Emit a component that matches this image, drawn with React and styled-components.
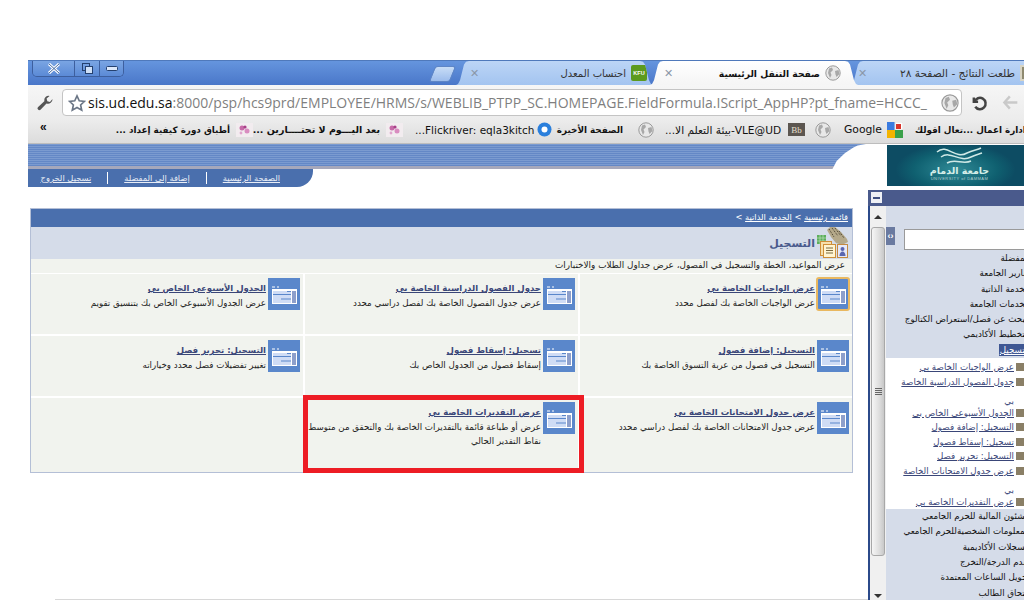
import React from "react";
import styled, { createGlobalStyle } from "styled-components";

const Global = createGlobalStyle`
  html, body { margin: 0; padding: 0; background: #fff; }
  body { width: 1024px; height: 600px; overflow: hidden; font-family: "DejaVu Sans", "Liberation Sans", sans-serif; }
  svg { flex: none; }
`;
const Page = styled.div`
  width: 1024px; height: 600px; overflow: hidden; padding-top: 60px; padding-left: 28px; box-sizing: border-box; position: relative;
`;
const Chrome = styled.div`width: 996px;`;
const TabStrip = styled.div`
  height: 25px; display: flex; align-items: flex-end; overflow: hidden;
  background: linear-gradient(#6595de, #4a77c9);
  border-top: 1px solid #4f79bb; box-sizing: border-box; position: relative; padding-left: 4px;
`;
const WinButtons = styled.div`
  display: flex; align-self: flex-start; width: 92px; height: 16px; box-sizing: border-box; flex: none;
  border: 1px solid #3d5f9e; border-top: 0; border-radius: 0 0 5px 5px; overflow: hidden; margin-right: 308px;
`;
const WinBtn = styled.div`
  width: ${p => p.$w}px; display: flex; align-items: center; justify-content: center; flex: none; box-sizing: border-box;
  border-right: 1px solid #3d5f9e; &:last-child { border-right: 0; }
  background: linear-gradient(#7aa5e3, #5b8ad6);
`;
const NewTab = styled.div`
  width: 21px; height: 16px; margin: 0 0 3px 0; transform: skewX(-22deg); flex: none; box-sizing: border-box;
  background: linear-gradient(#c8ddf6, #9cbcec); border: 1px solid #5f86c6; border-radius: 3px;
`;
const Tab = styled.div`
  width: ${p => p.$w}px; height: 24px; display: flex; align-items: center; flex: none; box-sizing: border-box;
  margin-left: ${p => p.$ml || 0}px; margin-right: ${p => p.$active ? -8 : -3}px;
  padding: 0 ${p => p.$pr}px 0 ${p => p.$pl}px; font-size: 11px; color: ${p => p.$active ? "#111" : "#333"};
  background: ${p => p.$active ? "linear-gradient(#fff,#f5f5f5)" : "linear-gradient(#bcd5f6,#a3c4f0)"};
  z-index: ${p => p.$active ? 2 : 1};
  clip-path: polygon(0 100%, 2px 96%, 4px 80%, 8px 15%, 10px 3%, 13px 0, calc(100% - 13px) 0, calc(100% - 10px) 3%, calc(100% - 8px) 15%, calc(100% - 4px) 80%, calc(100% - 2px) 96%, 100% 100%);
`;
const TabClose = styled.span`color: #8a97a8; font-size: 11px; font-family: "Liberation Sans", sans-serif; width: 7px; display: block; flex: none;`;
const TabTitle = styled.span`flex: 1; text-align: right; direction: rtl; white-space: nowrap; font-size: ${p => p.$s || 10}px; font-weight: ${p => p.$b ? 700 : 400}; padding-right: 5px;`;
const Toolbar = styled.div`
  height: 35px; display: flex; align-items: flex-start; background: linear-gradient(#f6f6f6, #ececec); box-sizing: border-box; padding-top: 4px;
`;
const ToolIcon = styled.div`
  width: ${p => p.$w}px; height: 27px; flex: none; display: flex; justify-content: center; align-items: center;
`;
const Omnibox = styled.div`
  width: 900px; height: 27px; flex: none; box-sizing: border-box; background: #fff;
  border: 1px solid #c4c4c4; border-radius: 4px; display: flex; align-items: center; padding: 0 2px 0 5px; gap: 2px;
  font-family: "Open Sans", "Liberation Sans", sans-serif; font-size: 14px; color: #7f7f7f; white-space: nowrap; overflow: hidden;
`;
const UrlHost = styled.span`color: #111;`;
const UrlWrap = styled.div`flex: 1; overflow: hidden;`;
const Bookmarks = styled.div`
  height: 24px; display: flex; align-items: center; position: relative; white-space: nowrap;
  background: linear-gradient(#ececec, #dcdcdc); border-bottom: 1px solid #bdbdbd; box-sizing: border-box;
  padding: 0 0 4px 88px; font-size: 10px; color: #111; overflow: hidden;
`;
const More = styled.div`
  position: absolute; left: 12px; top: 0; font: 700 12px/14px "Liberation Sans", sans-serif;
`;
const BookLabel = styled.span`
  width: ${p => p.$w}px; flex: none; display: block; direction: rtl; text-align: left; font-weight: ${p => p.$b ? 700 : 400}; font-size: ${p => p.$s || 10}px;
`;
const BookIcon = styled.span`display: flex; flex: none; margin: 0 ${p => p.$r}px 0 ${p => p.$l}px;`;
const Banner = styled.div`display: flex; height: 46px; align-items: flex-start;`;
const BannerLeft = styled.div`width: 859px; flex: none;`;
const Band = styled.div`
  height: 25px; width: 838px;
  background: repeating-linear-gradient(#7b9bd0 0 1px, #6488c6 1px 2px);
  border-bottom: 3px solid #a6a8bb; box-sizing: border-box;
  clip-path: polygon(0 0, 100% 0, 99% 6%, 98.5% 14%, 97.5% 36%, 96.5% 68%, 96% 100%, 0 100%);
`;
const NavTab = styled.div`
  width: 285px; height: 18px; background: #4a6fad; border-radius: 0 0 16px 0; direction: rtl;
  display: flex; align-items: center; gap: 16px; padding-right: 33px; box-sizing: border-box;
`;
const NavLink = styled.a`color: #e8edf6; text-decoration: underline; font-size: 8.300px; white-space: nowrap;`;
const NavSep = styled.span`width: 1px; height: 12px; background: #fff; flex: none;`;
const Logo = styled.div`
  width: 137px; height: 41px; flex: none; margin-top: 1px; padding-left: 8px; box-sizing: border-box;
  background: radial-gradient(ellipse 60px 26px at 50% 60%, #2f8a96, #0f6070 70%, #0d4c63);
  display: flex; flex-direction: column; align-items: center; color: #d6eee8; overflow: hidden;
`;
const LogoAr = styled.div`font-size: 9.500px; line-height: 10px; font-weight: 700; direction: rtl; margin-top: -1px;`;
const LogoEn = styled.div`font: 4px/5px "Liberation Sans", sans-serif; letter-spacing: .5px; color: #b0cfcf;`;
const Body = styled.div`display: flex; align-items: flex-start;`;
const Main = styled.div`
  width: 823px; margin: 18px 15px 0 2px; flex: none; box-sizing: border-box; border: 1px solid #b4bfd6; direction: rtl; background: #f1f3ee; position: relative;
`;
const Crumbs = styled.div`
  height: 18px; background: #4a6fad; color: #fff; font-size: 8.300px; line-height: 17px; padding-right: 4px; white-space: nowrap;
`;
const CrumbLink = styled.a`color: #fff; text-decoration: underline;`;
const TitleRow = styled.div`
  height: 32px; background: #d5dce9; display: flex; align-items: center; padding-right: 3px; gap: 2px; color: #4a5a8c; font-size: 11px; font-weight: 700;
`;
const DescRow = styled.div`height: 14px; font-size: 8.850px; line-height: 13px; padding-right: 7px; color: #222; white-space: nowrap;`;
const Grid = styled.div`
  display: grid; grid-template-columns: 272px 273px 272px; gap: 2px; background: #fff; border-top: 1px solid #fff;
  grid-template-rows: 60px 60px 74px;
`;
const Cell = styled.div`
  background: #f1f3ee; display: flex; gap: 2px; padding: 4px 3px 0 0; box-sizing: border-box; align-items: flex-start;
`;
const IconFrame = styled.div`
  width: 32px; height: 32px; flex: none; background: #5a87cb; border-radius: ${p => p.$on ? 2 : 0}px; position: relative;
  outline: ${p => p.$on ? "2px solid #e9b860" : "none"}; outline-offset: -1px;
`;
const CellText = styled.div`padding-top: 3px; min-width: 0;`;
const CellLink = styled.a`
  display: block; width: fit-content; color: #3a4678; font-size: 8.500px; font-weight: 700; text-decoration: underline; line-height: 14px; white-space: nowrap;
`;
const CellDesc = styled.div`font-size: 8.700px; line-height: 14px; color: #222; margin-top: 1px;`;
const RedBox = styled.div`
  position: absolute; left: 272px; top: 186px; width: 281px; height: 78px; box-sizing: border-box; border: 5px solid #ed1c24; pointer-events: none;
`;
const Side = styled.div`
  width: 162px; flex: none; direction: ltr;
`;
const SideHead = styled.div`
  height: 16px; background: #4a5a8c; padding: 2px 0 0 3px; box-sizing: border-box;
`;
const Minus = styled.div`
  width: 11px; height: 11px; background: #eef0f5; display: flex; align-items: center; justify-content: center;
  &::before { content: ""; width: 7px; height: 2px; background: #3f4f80; }
`;
const SideBody = styled.div`
  display: flex; height: 394px; border-left: 2px solid #2b4a8a; box-sizing: border-box;
`;
const Scroll = styled.div`
  width: 16px; flex: none; background: #f0f0f0; display: flex; flex-direction: column; align-items: center; padding-top: 9px; box-sizing: border-box;
`;
const ScrollUp = styled.div`
  width: 0; height: 0; border: 4px solid transparent; border-top: 0; border-bottom-color: #333; margin-bottom: 8px; flex: none;
`;
const Thumb = styled.div`
  width: 14px; height: 329px; flex: none; box-sizing: border-box; border: 1px solid #a8a8a8; border-radius: 3px;
  background: linear-gradient(90deg,#f6f6f6,#dedede 60%,#c8c8c8); display: flex; flex-direction: column; align-items: center; justify-content: center; gap: 1px;
`;
const Grip = styled.i`display: block; width: 7px; height: 1px; background: #666;`;
const ScrollDown = styled.div`
  width: 0; height: 0; border: 4px solid transparent; border-bottom: 0; border-top-color: #333; margin-top: 38px; flex: none;
`;
const SideMain = styled.div`flex: 1; direction: rtl; min-width: 0; background: #d5dce9; display: flex; flex-direction: column;`;
const SearchRow = styled.div`height: 45px; flex: none; display: flex; padding: 23px 0 0 0; box-sizing: border-box; position: relative;`;
const SearchInput = styled.div`width: 126px; height: 21px; background: #fff; border: 1px solid #9a9a9a; box-sizing: border-box;`;
const Handle = styled.div`
  position: absolute; left: 0; top: 21px; width: 9px; height: 18px; background: #6a7aa0; color: #fff;
  font: 700 9px/18px "Liberation Sans", sans-serif; text-align: center;
`;
const Menu = styled.div`font-size: 8.700px;`;
const MenuItem = styled.div`
  height: 15.300px; line-height: 15px; white-space: nowrap; color: #111;
`;
const Current = styled.span`background: #3f5793; color: #fff; text-decoration: underline; padding: 1px 0 1px 1px;`;
const SubList = styled.div`background: #fff; padding: 2px 0 0; height: 151px; box-sizing: border-box;`;
const SubItem = styled.div`
  display: flex; align-items: flex-start; padding-right: 6px; min-height: 14.600px; line-height: 14.600px;
  &::before { content: ""; width: 8px; height: 8px; background: #8a7f66; flex: none; margin: 3px 0 0 2px; }
`;
const SubLink = styled.a`color: #3a4678; text-decoration: underline; white-space: nowrap;`;
const SubWrap = styled.div`color: #3a4678;`;
const Tail = styled.div`margin: 4.400px 0 -2.600px; height: 14.600px;`;
const Floor = styled.div`
  position: absolute; left: 55px; width: 813px; bottom: 0; height: 1px; background: #d8d8d8;
`;

const Globe = ({ s = 16 }) => (
  <svg width={s} height={s} viewBox="0 0 16 16">
    <circle cx="8" cy="8" r="7.200" fill="#e8e8e8" stroke="#9a9a9a" />
    <path d="M4 3.500 7 2.500 8 5 5.500 7.500 6.500 10 5 13 3 8ZM10 6l3.500-1 1 4-3 3-1-2.500Z" fill="#a8a8a8" />
  </svg>
);
const Flower = () => (
  <svg width="17" height="14" viewBox="0 0 17 14">
    <rect width="17" height="14" fill="#f2ecef" />
    <circle cx="6" cy="5" r="2.500" fill="#c76aa8" /><circle cx="11" cy="8" r="2.500" fill="#d98cc0" /><circle cx="9" cy="4" r="1.600" fill="#a83f88" /><circle cx="5" cy="10" r="1.400" fill="#e0a6cf" />
  </svg>
);
const TileIcon = () => (
  <svg width="32" height="32" viewBox="0 0 32 32" style={{ position: "absolute", left: 0, top: 0 }}>
    <path d="M4 9h3M9 9h2" stroke="#fff" />
    <rect x="4" y="11" width="25" height="15" fill="#fff" />
    <rect x="5" y="13" width="18" height="12" fill="#cfdcf5" />
    <rect x="24" y="13" width="4" height="12" fill="#8d9fcb" />
    <path d="M5 16.500h18M19 13.500h4M13 21h10" stroke="#5a87cb" />
  </svg>
);

const cells = [
  ["عرض الواجبات الخاصة بي", "عرض الواجبات الخاصة بك لفصل محدد", true],
  ["جدول الفصول الدراسية الخاصة بي", "عرض جدول الفصول الخاصة بك لفصل دراسي محدد"],
  ["الجدول الأسبوعي الخاص بي", "عرض الجدول الأسبوعي الخاص بك بتنسيق تقويم"],
  ["التسجيل: إضافة فصول", "التسجيل في فصول من عربة التسوق الخاصة بك"],
  ["تسجيل: إسقاط فصول", "إسقاط فصول من الجدول الخاص بك"],
  ["التسجيل: تحرير فصل", "تغيير تفضيلات فصل محدد وخياراته"],
  ["عرض جدول الامتحانات الخاصة بي", "عرض جدول الامتحانات الخاصة بك لفصل دراسي محدد"],
  ["عرض التقديرات الخاصة بي", "عرض أو طباعة قائمة بالتقديرات الخاصة بك والتحقق من متوسط نقاط التقدير الحالي"],
];

export default function App() {
  return (
    <Page>
      <Global />
      <Chrome>
        <TabStrip>
          <WinButtons>
            <WinBtn $w={42}>
              <svg width="14" height="11" viewBox="0 0 14 11"><path d="M2 1l10 9M12 1 2 10" stroke="#fff" strokeWidth="3" /><path d="M2 1l10 9M12 1 2 10" stroke="#44689f" strokeWidth="1" /></svg>
            </WinBtn>
            <WinBtn $w={25}>
              <svg width="13" height="13" viewBox="0 0 13 13" fill="none" stroke="#24406f"><rect x="1.500" y="1.500" width="7" height="7" /><rect x="4.500" y="4.500" width="7" height="7" fill="#cfe0f7" /></svg>
            </WinBtn>
            <WinBtn $w={23}>
              <svg width="12" height="5" viewBox="0 0 12 5"><rect x=".5" y=".5" width="11" height="4" rx="1" fill="#dce8fa" stroke="#24406f" /></svg>
            </WinBtn>
          </WinButtons>
          <NewTab />
          <Tab $w={197} $ml={3} $pl={14} $pr={6}>
            <TabClose>✕</TabClose>
            <TabTitle $s={10}>احتساب المعدل</TabTitle>
            <svg width="16" height="16" viewBox="0 0 16 16"><rect width="16" height="16" rx="2" fill="#5c9a1e" /><text x="8" y="10" fontSize="5.500" fontWeight="700" fill="#fff" textAnchor="middle" fontFamily="Liberation Sans">KFU</text></svg>
          </Tab>
          <Tab $w={208} $active $pl={14} $pr={17}>
            <TabClose>✕</TabClose>
            <TabTitle $s={9.200} $b>صفحة التنقل الرئيسية</TabTitle>
            <Globe />
          </Tab>
          <Tab $w={190} $pl={8} $pr={4}>
            <TabClose>✕</TabClose>
            <TabTitle $s={10.600}>طلعت النتائج - الصفحة ٢٨</TabTitle>
            <svg width="16" height="16" viewBox="0 0 16 16"><rect width="16" height="16" fill="#d8d4c4" /><rect x="2" y="2" width="4" height="12" fill="#8f8a70" /></svg>
          </Tab>
        </TabStrip>
        <Toolbar>
          <ToolIcon $w={34}>
            <svg width="18" height="18" viewBox="0 0 24 24" fill="#555"><path d="M22 6.500a6 6 0 0 1-8 6L6 21a2.500 2.500 0 0 1-3.500-3.500l8.600-8a6 6 0 0 1 7-7l-4 3.500 1 3.500 3.500 1z" /></svg>
          </ToolIcon>
          <Omnibox>
            <svg width="18" height="18" viewBox="0 0 24 24" fill="#fff" stroke="#6b7686" strokeWidth="2.200"><path d="M12 2.500l3 6.500 7 .8-5.200 4.800 1.500 7-6.300-3.600-6.300 3.600 1.500-7L2 9.800l7-.8z" /></svg>
            <UrlWrap><UrlHost>sis.ud.edu.sa</UrlHost>:8000/psp/hcs9prd/EMPLOYEE/HRMS/s/WEBLIB_PTPP_SC.HOMEPAGE.FieldFormula.IScript_AppHP?pt_fname=HCCC_</UrlWrap>
            <Globe s={18} />
          </Omnibox>
          <ToolIcon $w={34}>
            <svg width="17" height="17" viewBox="0 0 24 24" fill="none" stroke="#444" strokeWidth="3.500"><path d="M4 5v6h6" /><path d="M5 11a8 8 0 1 1 1 7" /></svg>
          </ToolIcon>
          <ToolIcon $w={28}>
            <svg width="17" height="15" viewBox="0 0 24 22" fill="none" stroke="#c9c9c9" strokeWidth="3.500"><path d="M22 11H3M11 2l-8 9 8 9" /></svg>
          </ToolIcon>
        </Toolbar>
        <Bookmarks>
          <More>«</More>
          <BookLabel $w={114} $s={8.800} $b>أطباق دورة كيفية إعداد ...</BookLabel>
          <BookIcon $l={6} $r={12}><Flower /></BookIcon>
          <BookLabel $w={115} $s={9.500} $b>بعد اليـــوم لا تحتــــارين ...</BookLabel>
          <BookIcon $l={6} $r={12}><Flower /></BookIcon>
          <BookLabel $w={120} $s={10.500}>Flickriver: eqla3kitch...</BookLabel>
          <BookIcon $l={2} $r={11}><svg width="15" height="15" viewBox="0 0 15 15"><circle cx="7.500" cy="7.500" r="7" fill="#2a7fdc" /><circle cx="7.500" cy="7.500" r="3" fill="#fff" /></svg></BookIcon>
          <BookLabel $w={60} $s={8.800} $b>الصفحة الأخيرة</BookLabel>
          <BookIcon $l={15} $r={11}><Globe /></BookIcon>
          <BookLabel $w={118} $s={10.600}>VLE@UD-بيئة التعلم الا...</BookLabel>
          <BookIcon $l={5} $r={10}><svg width="17" height="13" viewBox="0 0 17 13"><rect width="17" height="13" fill="#5c5650" /><text x="8.500" y="10" fontSize="9" fontFamily="Liberation Serif" fill="#e8e0d0" textAnchor="middle">Bb</text></svg></BookIcon>
          <BookIcon $l={0} $r={13}><Globe /></BookIcon>
          <BookLabel $w={38} $s={10.800}>Google</BookLabel>
          <BookIcon $l={5} $r={12}><svg width="16" height="16" viewBox="0 0 16 16"><rect width="8" height="8" fill="#3a7be0" /><rect x="8" width="8" height="8" fill="#fff" stroke="#ddd" /><rect y="8" width="8" height="8" fill="#f4b400" /><rect x="8" y="8" width="8" height="8" fill="#3aa14a" /><rect x="9" y="2" width="5" height="5" fill="#d9342b" /></svg></BookIcon>
          <BookLabel $w={120} $s={8.800} $b>ادارة اعمال ...تعال اقولك</BookLabel>
        </Bookmarks>
        <Banner>
          <BannerLeft>
            <Band />
            <NavTab>
              <NavLink>الصفحة الرئيسية</NavLink>
              <NavSep />
              <NavLink>إضافة إلى المفضلة</NavLink>
              <NavSep />
              <NavLink>تسجيل الخروج</NavLink>
            </NavTab>
          </BannerLeft>
          <Logo>
            <svg width="70" height="22" viewBox="0 0 70 22" fill="none" stroke="#cfe9e6" strokeWidth="1.500">
              <path d="M12 7c10-9 18 8 30 1 6-3 10-3 14-5" />
              <path d="M16 12c10-7 18 6 30 0 6-3 8-3 11-4" />
              <path d="M22 18c8-5 16 2 24-2" />
            </svg>
            <LogoAr>جامعة الدمام</LogoAr>
            <LogoEn>UNIVERSITY of DAMMAM</LogoEn>
          </Logo>
        </Banner>
        <Body>
          <Main>
            <Crumbs><CrumbLink>قائمة رئيسية</CrumbLink> &gt; <CrumbLink>الخدمة الذاتية</CrumbLink> &gt;</Crumbs>
            <TitleRow>
              <svg width="32" height="32" viewBox="0 0 32 32">
                <rect x="0" y="8" width="9" height="9" fill="#5cae5c" />
                <path d="M0 11h9M0 14h9M3 8v9M6 8v9" stroke="#cfe8cf" strokeWidth=".6" />
                <path d="M10 3l3-3 5 0 6 5 6 7 1 3-6 3-6-2-5-6z" fill="#b5a98a" />
                <path d="M12 2l5 8M15 1l6 8M18 1l6 8M22 4l5 7" stroke="#3f3828" strokeDasharray="1 1" />
                <rect x="3.500" y="14.500" width="11" height="14" fill="#f6e0ae" stroke="#cf8f38" />
                <rect x="6.500" y="17.500" width="12" height="13" fill="#fff4d2" stroke="#cf8f38" />
                <path d="M9 21h7M9 23.500h7M9 26h7" stroke="#7a6a40" />
                <rect x="20.500" y="17.500" width="10" height="13" fill="#e6e8f8" stroke="#c58a40" />
                <circle cx="25.500" cy="22" r="2" fill="#5b66b0" />
                <path d="M22.500 29c0-6 6-6 6 0z" fill="#5b66b0" />
              </svg>
              التسجيل
            </TitleRow>
            <DescRow>عرض المواعيد، الخطة والتسجيل في الفصول، عرض جداول الطلاب والاختبارات</DescRow>
            <Grid>
              {cells.map(([t, d, on]) => (
                <Cell key={t}>
                  <IconFrame $on={on}><TileIcon /></IconFrame>
                  <CellText>
                    <CellLink>{t}</CellLink>
                    <CellDesc>{d}</CellDesc>
                  </CellText>
                </Cell>
              ))}
              <Cell />
            </Grid>
            <RedBox />
          </Main>
          <Side>
            <SideHead><Minus /></SideHead>
            <SideBody>
              <Scroll>
                <ScrollUp />
                <Thumb><Grip /><Grip /><Grip /><Grip /></Thumb>
                <ScrollDown />
              </Scroll>
              <SideMain>
                <SearchRow><SearchInput /><Handle>‹›</Handle></SearchRow>
                <Menu>
                  <MenuItem>المفضلة</MenuItem>
                  <MenuItem>تقارير الجامعة</MenuItem>
                  <MenuItem>الخدمة الذاتية</MenuItem>
                  <MenuItem>الخدمات الجامعة</MenuItem>
                  <MenuItem>البحث عن فصل/استعراض الكتالوج</MenuItem>
                  <MenuItem>التخطيط الأكاديمي</MenuItem>
                  <MenuItem><Current>التسجيل</Current></MenuItem>
                  <SubList>
                    <SubItem><SubLink>عرض الواجبات الخاصة بي</SubLink></SubItem>
                    <SubItem><SubWrap><SubLink>جدول الفصول الدراسية الخاصة</SubLink><Tail>بي</Tail></SubWrap></SubItem>
                    <SubItem><SubLink>الجدول الأسبوعي الخاص بي</SubLink></SubItem>
                    <SubItem><SubLink>التسجيل: إضافة فصول</SubLink></SubItem>
                    <SubItem><SubLink>تسجيل: إسقاط فصول</SubLink></SubItem>
                    <SubItem><SubLink>التسجيل: تحرير فصل</SubLink></SubItem>
                    <SubItem><SubWrap><SubLink>عرض جدول الامتحانات الخاصة</SubLink><Tail>بي</Tail></SubWrap></SubItem>
                    <SubItem><SubLink>عرض التقديرات الخاصة بي</SubLink></SubItem>
                  </SubList>
                  <MenuItem>الشئون المالية للحرم الجامعي</MenuItem>
                  <MenuItem>المعلومات الشخصيةللحرم الجامعي</MenuItem>
                  <MenuItem>السجلات الأكاديمية</MenuItem>
                  <MenuItem>تقدم الدرجة/التخرج</MenuItem>
                  <MenuItem>تحويل الساعات المعتمدة</MenuItem>
                  <MenuItem>التحاق الطالب</MenuItem>
                </Menu>
              </SideMain>
            </SideBody>
          </Side>
        </Body>
      </Chrome>
      <Floor />
    </Page>
  );
}
